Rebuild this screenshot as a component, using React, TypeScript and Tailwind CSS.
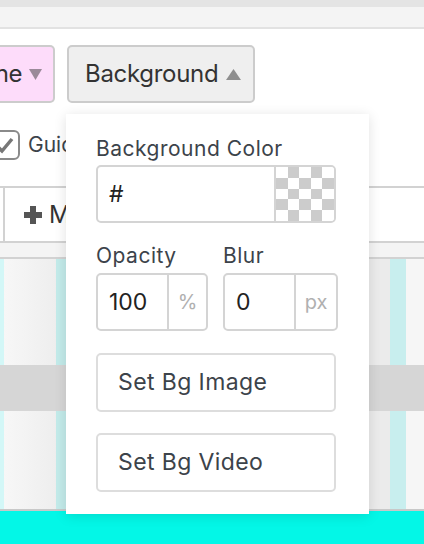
import React from 'react';

const font = { fontFamily: 'Inter, "Noto Sans", sans-serif' };

const Checker: React.FC = () => {
  const cells = [];
  for (let r = 0; r < 5; r++) {
    for (let c = 0; c < 5; c++) {
      cells.push(
        <div key={`${r}-${c}`} className={(r + c) % 2 === 1 ? 'bg-[#cccccc]' : 'bg-white'} />
      );
    }
  }
  return <div className="grid grid-cols-5 grid-rows-5 w-[58px] h-full">{cells}</div>;
};

const Tri: React.FC<{ up?: boolean; color: string; w: number }> = ({ up, color, w }) => (
  <svg className="shrink-0" width={w} height="11" viewBox={`0 0 ${w} 11`}>
    <path d={up ? `M${w / 2} 0 L${w} 11 L0 11 Z` : `M0 0 L${w} 0 L${w / 2} 11 Z`} fill={color} />
  </svg>
);

const UnitInput: React.FC<{ value: string; unit: string }> = ({ value, unit }) => (
  <div className="flex h-[58px] border-2 border-[#d4d4d4] rounded-[5px] overflow-hidden">
    <div className="w-[69px] flex items-center pl-[11px] text-[23px] text-[#222]">{value}</div>
    <div className="flex-1 border-l-2 border-[#d4d4d4] flex items-center justify-center text-[20px] text-[#b0b0b0]">{unit}</div>
  </div>
);

export default function App() {
  return (
    <div className="relative w-[424px] h-[544px] overflow-hidden bg-white" style={font}>
      <div className="h-[7px] bg-[#e4e4e4]" />
      <div className="h-[22px] bg-[#f4f4f4] border-b-2 border-[#e2e2e2]" />

      <div className="flex items-center gap-[12px] pt-[16px]">
        <div className="h-[58px] w-[55px] shrink-0 bg-[#fddcfa] border-2 border-[#cccccc] rounded-r-[5px] border-l-0 flex items-center justify-end pr-[11px] gap-[7px] text-[24px] text-[#333]">
          <span className="whitespace-nowrap tracking-[-0.5px]">ne</span>
          <Tri color="#9a8a99" w={13} />
        </div>
        <div className="h-[58px] w-[188px] bg-[#efefef] border-2 border-[#cccccc] rounded-[5px] flex items-center pl-[16px] gap-[8px] text-[24px] text-[#333]">
          <span className="tracking-[-0.3px]">Background</span>
          <Tri up color="#8f8f8f" w={15} />
        </div>
      </div>

      <div className="flex items-center h-[34px] mt-[25px] gap-[8px] -ml-[12px]">
        <div className="w-[32px] h-[30px] border-2 border-[#8a8a8a] rounded-[6px] flex items-center justify-center">
          <svg width="22" height="18" viewBox="0 0 22 18">
            <path d="M3 9 L9 15 L19 3" fill="none" stroke="#777" strokeWidth="3.5" />
          </svg>
        </div>
        <span className="text-[21px] text-[#3c434a]">Guides</span>
      </div>

      <div className="mt-[24px] h-[57px] border-y-2 border-[#d2d2d2] flex">
        <div className="w-[5px] border-r-2 border-[#d2d2d2]" />
        <div className="flex items-center pl-[19px] gap-[7px] text-[24px] text-[#333]">
          <svg width="18" height="18" viewBox="0 0 18 18">
            <path d="M6 0h6v6h6v6h-6v6h-6v-6h-6v-6h6z" fill="#555" />
          </svg>
          <span>Menu</span>
        </div>
      </div>

      <div className="h-[16px] bg-[#f4f4f4] border-b-2 border-[#d2d2d2]" />

      <div className="relative h-[250px] flex">
        <div className="w-[4px] bg-[#d3f7f7]" />
        <div className="w-[52px] bg-gradient-to-r from-[#f7f7f7] to-[#eeeeee]" />
        <div className="w-[10px] bg-[#c3ebea]" />
        <div className="flex-1 bg-[#f2f2f2]" />
        <div className="w-[21px] bg-[#ebebeb]" />
        <div className="w-[16px] bg-[#c8eeee]" />
        <div className="w-[18px] bg-[#f6f6f6]" />
        <div className="absolute left-0 right-0 top-[106px] h-[46px] bg-[#d6d6d6]" />
      </div>
      <div className="h-[2px] bg-[#c8c8c8]" />
      <div className="h-[34px] bg-[#03f7e7]" />

      <div className="absolute left-[66px] top-[114px] w-[303px] h-[400px] bg-white shadow-[0_2px_12px_rgba(0,0,0,0.12)] px-[30px] pt-[22px] text-[#3c434a]">
        <div className="text-[21px] leading-[26px] tracking-[0.5px]">Background Color</div>
        <div className="mt-[3px] flex h-[58px] w-[240px] border-2 border-[#d4d4d4] rounded-[5px] overflow-hidden">
          <div className="flex-1 flex items-center pl-[11px] text-[23px] text-[#222]">#</div>
          <div className="border-l-2 border-[#d4d4d4]">
            <Checker />
          </div>
        </div>

        <div className="mt-[20px] flex gap-[15px]">
          <div className="w-[112px]">
            <div className="text-[21px] leading-[26px] tracking-[0.5px] mb-[4px]">Opacity</div>
            <UnitInput value="100" unit="%" />
          </div>
          <div className="w-[115px]">
            <div className="text-[21px] leading-[26px] tracking-[0.5px] mb-[4px]">Blur</div>
            <UnitInput value="0" unit="px" />
          </div>
        </div>

        <div className="mt-[22px] flex flex-col gap-[21px]">
          <div className="h-[59px] w-[240px] border-2 border-[#dddddd] rounded-[5px] flex items-center pl-[20px] text-[23px] tracking-[0.4px]">Set Bg Image</div>
          <div className="h-[59px] w-[240px] border-2 border-[#dddddd] rounded-[5px] flex items-center pl-[20px] text-[23px] tracking-[0.4px]">Set Bg Video</div>
        </div>
      </div>
    </div>
  );
}
